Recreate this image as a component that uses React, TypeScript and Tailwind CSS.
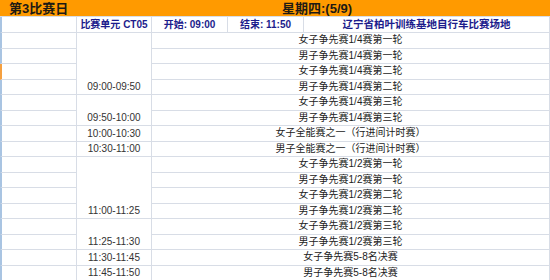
const events = [
  "女子争先赛1/4赛第一轮",
  "男子争先赛1/4赛第一轮",
  "女子争先赛1/4赛第二轮",
  "男子争先赛1/4赛第二轮",
  "女子争先赛1/4赛第三轮",
  "男子争先赛1/4赛第三轮",
  "女子全能赛之一（行进间计时赛）",
  "男子全能赛之一（行进间计时赛）",
  "女子争先赛1/2赛第一轮",
  "男子争先赛1/2赛第一轮",
  "女子争先赛1/2赛第二轮",
  "男子争先赛1/2赛第二轮",
  "女子争先赛1/2赛第三轮",
  "男子争先赛1/2赛第三轮",
  "女子争先赛5-8名决赛",
  "男子争先赛5-8名决赛",
]

// time slots: label + class for how many rows the merged cell covers
const slots = [
  { time: "09:00-09:50", span: "row-span-4" },
  { time: "09:50-10:00", span: "row-span-2" },
  { time: "10:00-10:30", span: "row-span-1" },
  { time: "10:30-11:00", span: "row-span-1" },
  { time: "11:00-11:25", span: "row-span-4" },
  { time: "11:25-11:30", span: "row-span-2" },
  { time: "11:30-11:45", span: "row-span-1" },
  { time: "11:45-11:50", span: "row-span-1" },
]

const font = "font-['Liberation_Sans','Noto_Sans_CJK_SC',sans-serif]"
const line = "border-r border-b border-[#d8dde6]"

export default function App() {
  return (
    <div className={`h-[280px] w-[550px] overflow-hidden bg-white ${font}`}>
      <div className="grid grid-cols-[77px_75px_76px_76px_246px] grid-rows-[17px_16px_repeat(16,15.5px)]">
        {/* day banner */}
        <div className="col-span-5 flex items-center border-b border-[#d8dde6] bg-[#ff9a00] text-[13px] font-bold leading-none text-[#1e1a14]">
          <span className="w-[282px] pl-[9px]">第3比赛日</span>
          <span>星期四:(5/9)</span>
        </div>

        {/* unit header */}
        <div className={`${line} border-l-2 border-l-[#a9c4e2]`} />
        <div className={`${line} flex items-center justify-center text-[10px] font-bold text-[#1c1c8c]`}>
          比赛单元 CT05
        </div>
        <div className={`${line} flex items-center justify-center text-[10px] font-bold text-[#1c1c8c]`}>
          开始: 09:00
        </div>
        <div className={`${line} flex items-center justify-center text-[10px] font-bold text-[#1c1c8c]`}>
          结束: 11:50
        </div>
        <div className={`${line} flex items-center justify-center text-[10.5px] font-bold text-[#1c1c8c]`}>
          辽宁省柏叶训练基地自行车比赛场地
        </div>

        {/* column A: empty cells */}
        {events.map((_, i) => (
          <div
            key={`a${i}`}
            className={`col-start-1 ${line} border-l-2 ${i === 2 ? "border-l-[#f5a040]" : "border-l-[#a9c4e2]"}`}
            style={{ gridRowStart: i + 3 }}
          />
        ))}

        {/* column B: merged time cells */}
        {slots.map((s, i) => (
          <div
            key={s.time}
            className={`col-start-2 ${s.span} ${line} flex items-end justify-center text-[10px] leading-[14px] text-[#333]`}
            style={{
              gridRowStart:
                3 + [0, 4, 6, 7, 8, 12, 14, 15][i],
            }}
          >
            {s.time}
          </div>
        ))}

        {/* event names */}
        {events.map((e, i) => (
          <div
            key={e}
            className={`col-start-3 col-span-3 ${line} flex items-center justify-center text-[10px] leading-none text-[#222]`}
            style={{ gridRowStart: i + 3 }}
          >
            {e}
          </div>
        ))}
      </div>
    </div>
  )
}
